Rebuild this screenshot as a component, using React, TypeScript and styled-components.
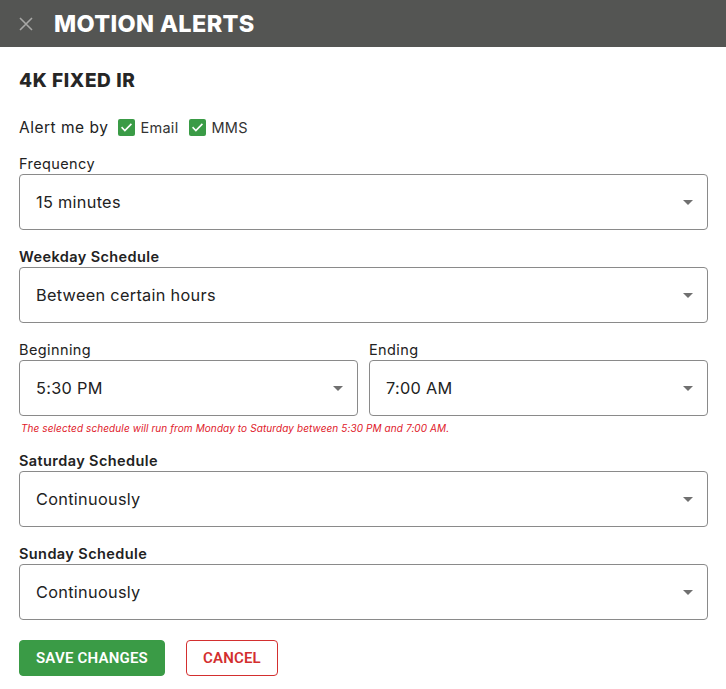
import React from "react";
import styled, { createGlobalStyle } from "styled-components";

const Global = createGlobalStyle`
  html, body { margin: 0; padding: 0; background: #fff; }
  body { font-family: Inter, "Noto Sans", sans-serif; color: #222; }
  * { box-sizing: border-box; }
`;

const Page = styled.div`
  width: 726px;
  min-height: 689px;
  background: #fff;
`;

const Header = styled.div`
  height: 47px;
  background: #545553;
  display: flex;
  align-items: center;
  padding-left: 19px;
  gap: 21px;
`;

const CloseBtn = styled.button`
  width: 14px;
  height: 14px;
  padding: 0;
  border: none;
  background: none;
  display: flex;
  align-items: center;
  justify-content: center;
  cursor: pointer;
`;

const Title = styled.h1`
  margin: 0;
  font-size: 23.5px;
  font-weight: 800;
  color: #fff;
  letter-spacing: 0.35px;
`;

const Body = styled.div`
  padding: 22px 18px 0 19px;
  display: flex;
  flex-direction: column;
`;

const Camera = styled.h2`
  margin: 0;
  font-size: 19px;
  font-weight: 800;
  color: #262626;
  line-height: 24px;
  letter-spacing: 0.6px;
`;

const AlertRow = styled.div`
  display: flex;
  align-items: center;
  margin-top: 23px;
  font-size: 15.5px;
  height: 22px;
  letter-spacing: 0.5px;
`;

const AlertLabel = styled.span`
  margin-right: 10px;
  color: #222;
`;

const Check = styled.label`
  display: flex;
  align-items: center;
  gap: 5px;
  margin-right: 11px;
  font-size: 14.5px;
  color: #333;
  letter-spacing: 0.3px;
`;

const Box = styled.span`
  width: 17px;
  height: 17px;
  border-radius: 2px;
  background: #3a9b46;
  display: flex;
  align-items: center;
  justify-content: center;
`;

const Field = styled.div<{ $top: number }>`
  display: flex;
  flex-direction: column;
  margin-top: ${(p) => p.$top}px;
  flex: 1;
`;

const Label = styled.div<{ $bold?: boolean }>`
  font-size: 14.5px;
  line-height: 18px;
  font-weight: ${(p) => (p.$bold ? 600 : 400)};
  color: #222;
  margin-bottom: 1px;
  letter-spacing: 0.4px;
`;

const Select = styled.div`
  height: 56px;
  border: 1px solid #8a8a8a;
  border-radius: 4px;
  display: flex;
  align-items: center;
  justify-content: space-between;
  padding: 0 14px 0 16px;
  font-size: 16.3px;
  letter-spacing: 0.3px;
  color: #222;
`;

const Caret = styled.span`
  width: 0;
  height: 0;
  border-left: 5px solid transparent;
  border-right: 5px solid transparent;
  border-top: 5px solid #707070;
`;

const Split = styled.div`
  display: flex;
  gap: 11px;
`;

const Hint = styled.div`
  margin-top: 6px;
  margin-left: 2px;
  font-size: 10px;
  line-height: 12px;
  font-style: italic;
  letter-spacing: 0.1px;
  color: #e0202a;
`;

const Actions = styled.div`
  display: flex;
  gap: 21px;
  margin-top: 20px;
`;

const Button = styled.button<{ $primary?: boolean }>`
  height: 36px;
  padding: 0 16px;
  border-radius: 4px;
  font-family: Roboto, "Liberation Sans", sans-serif;
  font-weight: 600;
  font-size: 15px;
  letter-spacing: 0.2px;
  text-transform: uppercase;
  cursor: pointer;
  border: 1px solid ${(p) => (p.$primary ? "#3a9b46" : "#d32f2f")};
  background: ${(p) => (p.$primary ? "#3a9b46" : "#fff")};
  color: ${(p) => (p.$primary ? "#fff" : "#d32f2f")};
`;

const Tick = () => (
  <svg width="13" height="13" viewBox="0 0 24 24">
    <path d="M4 12.5l5 5L20 6.5" fill="none" stroke="#fff" strokeWidth="3" strokeLinecap="square" />
  </svg>
);

const SelectBox = ({ value }: { value: string }) => (
  <Select>
    <span>{value}</span>
    <Caret />
  </Select>
);

export default function App() {
  return (
    <Page>
      <Global />
      <Header>
        <CloseBtn aria-label="close">
          <svg width="14" height="14" viewBox="0 0 14 14">
            <path d="M1 1L13 13M13 1L1 13" stroke="#a8a8a6" strokeWidth="1.6" />
          </svg>
        </CloseBtn>
        <Title>MOTION ALERTS</Title>
      </Header>
      <Body>
        <Camera>4K FIXED IR</Camera>
        <AlertRow>
          <AlertLabel>Alert me by</AlertLabel>
          <Check>
            <Box>
              <Tick />
            </Box>
            Email
          </Check>
          <Check>
            <Box>
              <Tick />
            </Box>
            MMS
          </Check>
        </AlertRow>
        <Field $top={17}>
          <Label>Frequency</Label>
          <SelectBox value="15 minutes" />
        </Field>
        <Field $top={18}>
          <Label $bold>Weekday Schedule</Label>
          <SelectBox value="Between certain hours" />
        </Field>
        <Split>
          <Field $top={18}>
            <Label>Beginning</Label>
            <SelectBox value="5:30 PM" />
          </Field>
          <Field $top={18}>
            <Label>Ending</Label>
            <SelectBox value="7:00 AM" />
          </Field>
        </Split>
        <Hint>The selected schedule will run from Monday to Saturday between 5:30 PM and 7:00 AM.</Hint>
        <Field $top={18}>
          <Label $bold>Saturday Schedule</Label>
          <SelectBox value="Continuously" />
        </Field>
        <Field $top={18}>
          <Label $bold>Sunday Schedule</Label>
          <SelectBox value="Continuously" />
        </Field>
        <Actions>
          <Button $primary>Save Changes</Button>
          <Button>Cancel</Button>
        </Actions>
      </Body>
    </Page>
  );
}
